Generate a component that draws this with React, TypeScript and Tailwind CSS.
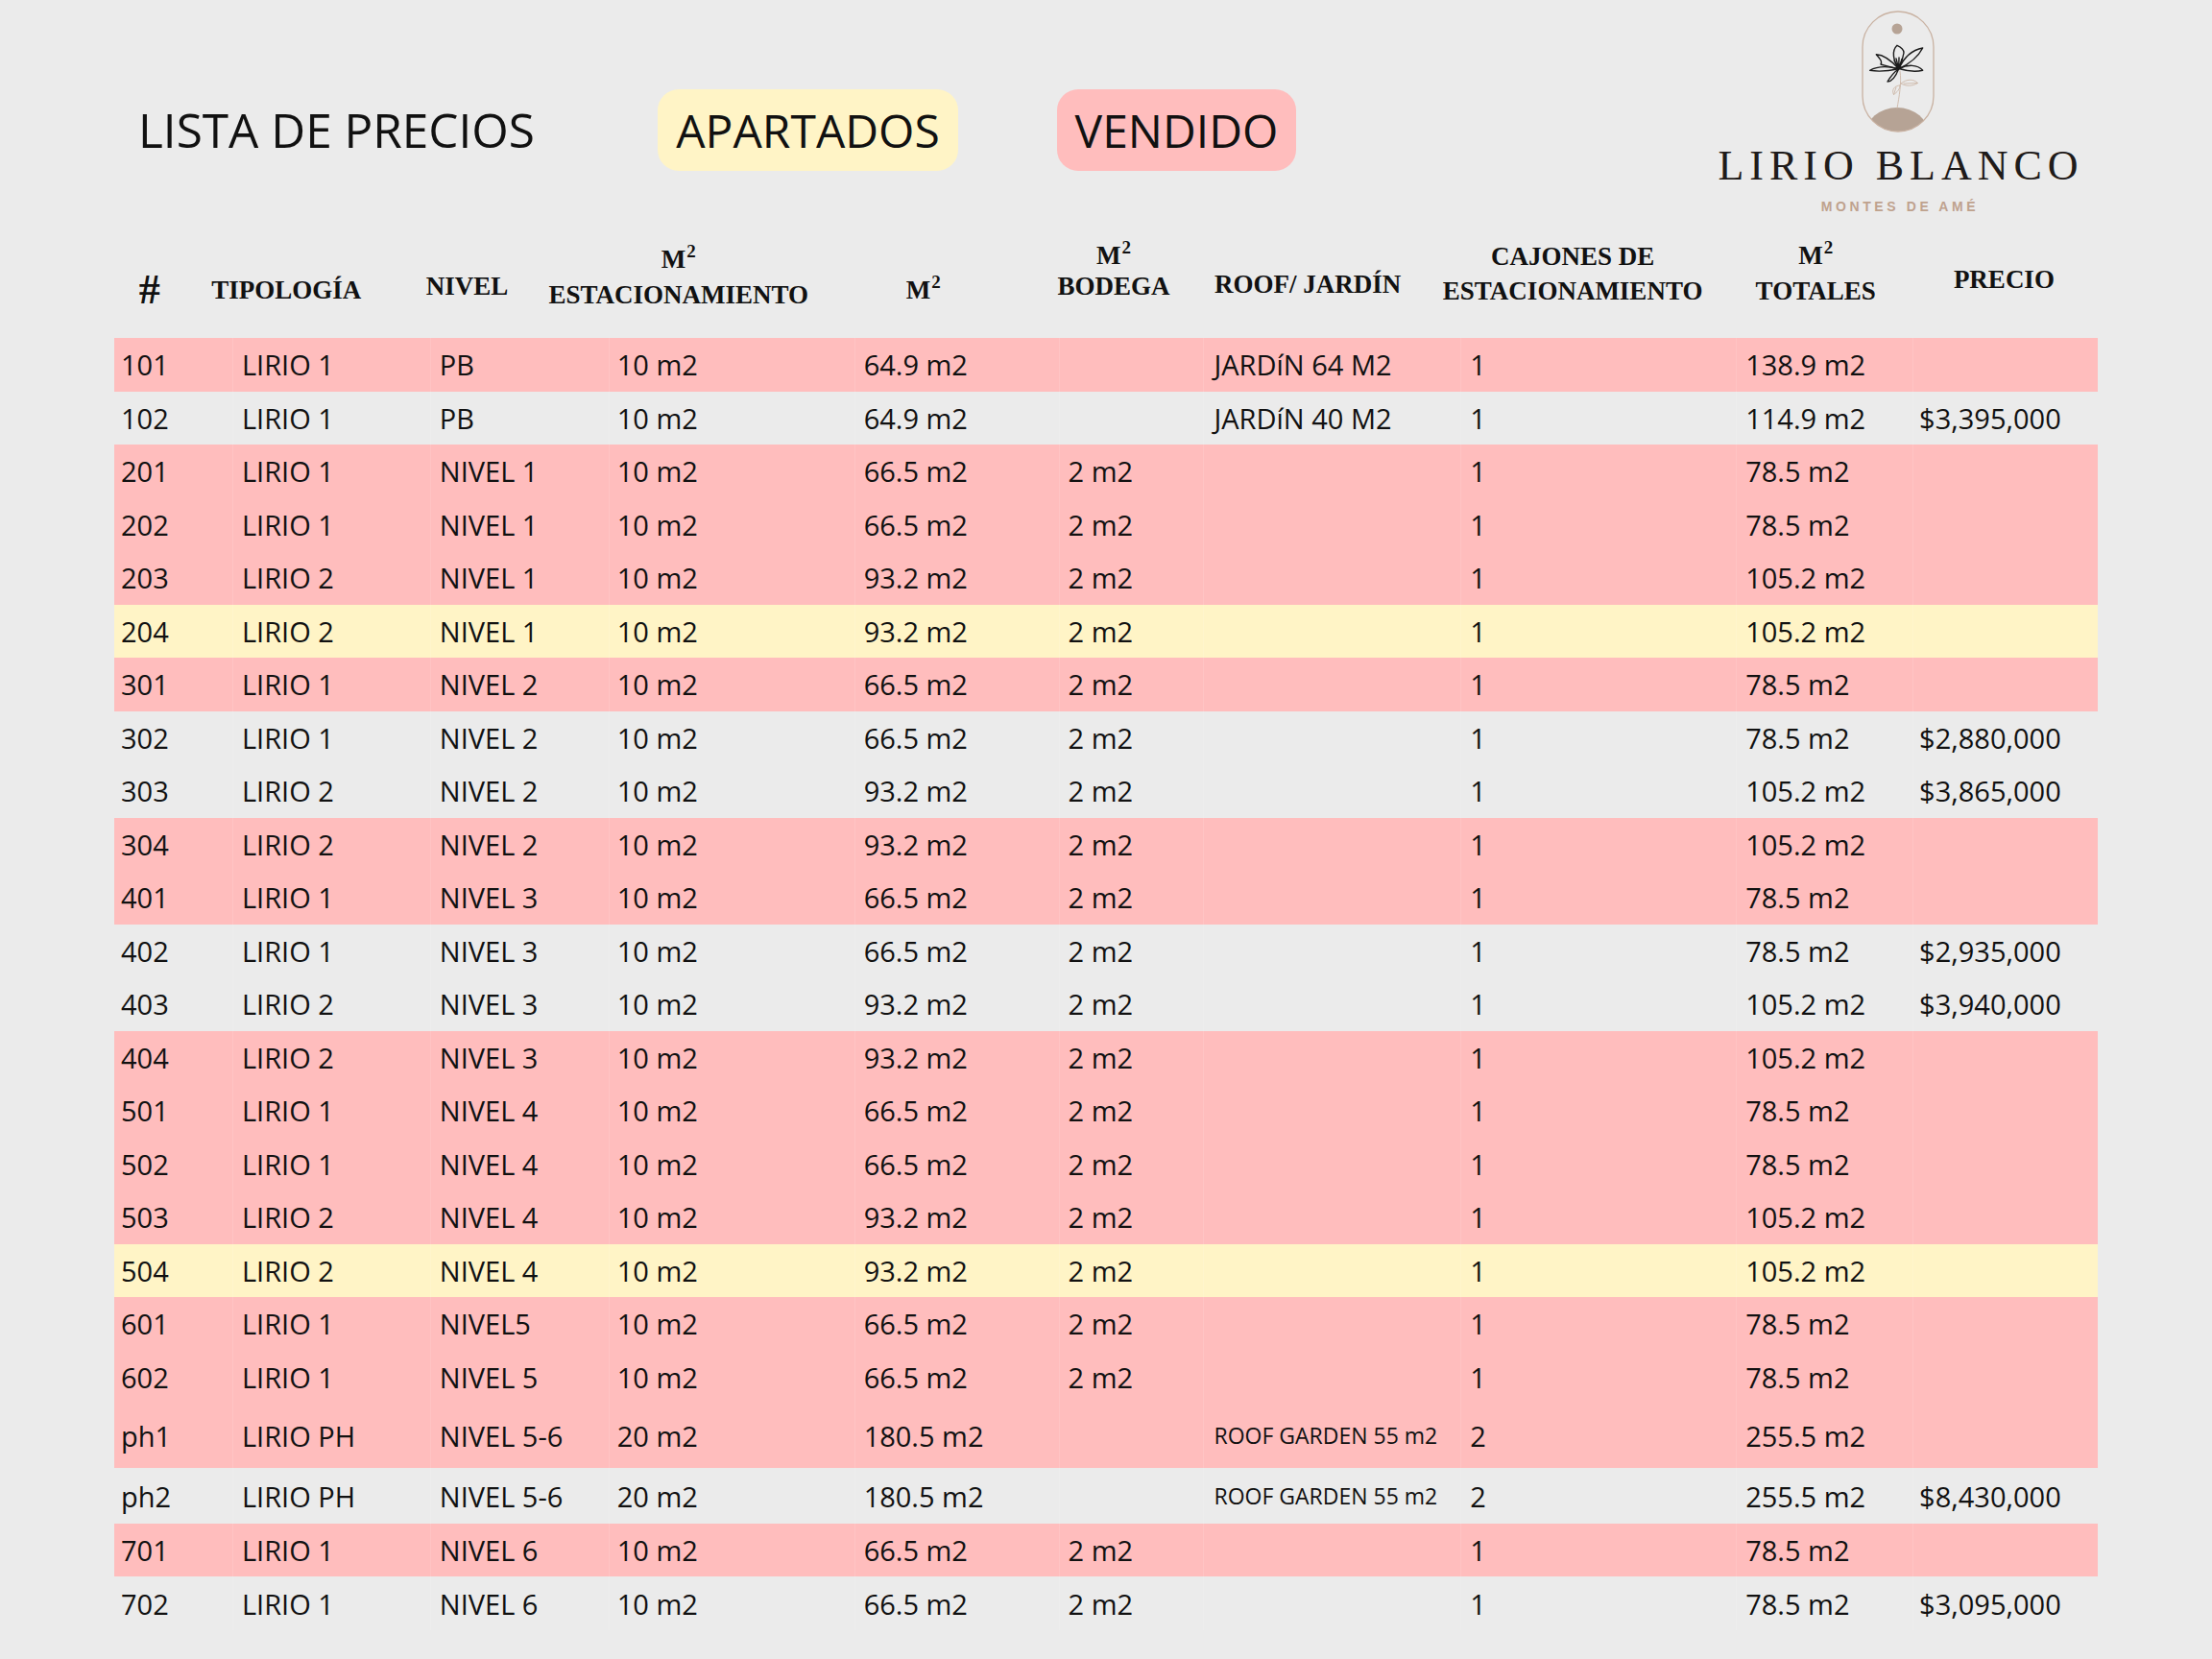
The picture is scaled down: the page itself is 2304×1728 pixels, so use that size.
import { FC } from 'react'

type Row = {
  id: string
  tipo: string
  nivel: string
  est: string
  m2: string
  bodega: string
  roof: string
  cajones: string
  total: string
  precio: string
  status: 'vendido' | 'apartado' | 'libre'
  h: string
}

const L1 = (id: string, nivel: string, status: Row['status'], precio = ''): Row => ({
  id, tipo: 'LIRIO 1', nivel, est: '10 m2', m2: '66.5 m2', bodega: '2 m2', roof: '', cajones: '1', total: '78.5 m2', precio, status, h: 'h-[55.5px]',
})
const L2 = (id: string, nivel: string, status: Row['status'], precio = ''): Row => ({
  id, tipo: 'LIRIO 2', nivel, est: '10 m2', m2: '93.2 m2', bodega: '2 m2', roof: '', cajones: '1', total: '105.2 m2', precio, status, h: 'h-[55.5px]',
})

const rows: Row[] = [
  { id: '101', tipo: 'LIRIO 1', nivel: 'PB', est: '10 m2', m2: '64.9 m2', bodega: '', roof: 'JARDíN 64 M2', cajones: '1', total: '138.9 m2', precio: '', status: 'vendido', h: 'h-[55.5px]' },
  { id: '102', tipo: 'LIRIO 1', nivel: 'PB', est: '10 m2', m2: '64.9 m2', bodega: '', roof: 'JARDíN 40 M2', cajones: '1', total: '114.9 m2', precio: '$3,395,000', status: 'libre', h: 'h-[55.5px]' },
  L1('201', 'NIVEL 1', 'vendido'),
  L1('202', 'NIVEL 1', 'vendido'),
  L2('203', 'NIVEL 1', 'vendido'),
  L2('204', 'NIVEL 1', 'apartado'),
  L1('301', 'NIVEL 2', 'vendido'),
  L1('302', 'NIVEL 2', 'libre', '$2,880,000'),
  L2('303', 'NIVEL 2', 'libre', '$3,865,000'),
  L2('304', 'NIVEL 2', 'vendido'),
  L1('401', 'NIVEL 3', 'vendido'),
  L1('402', 'NIVEL 3', 'libre', '$2,935,000'),
  L2('403', 'NIVEL 3', 'libre', '$3,940,000'),
  L2('404', 'NIVEL 3', 'vendido'),
  L1('501', 'NIVEL 4', 'vendido'),
  L1('502', 'NIVEL 4', 'vendido'),
  L2('503', 'NIVEL 4', 'vendido'),
  L2('504', 'NIVEL 4', 'apartado'),
  L1('601', 'NIVEL5', 'vendido'),
  L1('602', 'NIVEL 5', 'vendido'),
  { id: 'ph1', tipo: 'LIRIO PH', nivel: 'NIVEL 5-6', est: '20 m2', m2: '180.5 m2', bodega: '', roof: 'ROOF GARDEN 55 m2', cajones: '2', total: '255.5 m2', precio: '', status: 'vendido', h: 'h-[67px]' },
  { id: 'ph2', tipo: 'LIRIO PH', nivel: 'NIVEL 5-6', est: '20 m2', m2: '180.5 m2', bodega: '', roof: 'ROOF GARDEN 55 m2', cajones: '2', total: '255.5 m2', precio: '$8,430,000', status: 'libre', h: 'h-[58px]' },
  { ...L1('701', 'NIVEL 6', 'vendido'), h: 'h-[55px]' },
  { ...L1('702', 'NIVEL 6', 'libre', '$3,095,000'), h: 'h-[56px]' },
]

const cols = [
  'w-[123px] pl-[7px]',
  'w-[206px] pl-[9px] border-l border-white/10',
  'w-[186px] pl-[9px] border-l border-white/10',
  'w-[256px] pl-[8px] border-l border-white/10',
  'w-[213px] pl-[9px] border-l border-white/10',
  'w-[151px] pl-[9px] border-l border-white/10',
  'w-[268px] pl-[10px] border-l border-white/10',
  'w-[287px] pl-[9px] border-l border-white/10',
  'w-[184px] pl-[9px] border-l border-white/10',
  'w-[193px] pl-[6px] border-l border-white/10',
]

const bg = {
  vendido: 'bg-[#FFBDBD]',
  apartado: 'bg-[#FFF4C6]',
  libre: '',
}

// superíndice del M²
const Sq: FC = () => (
  <span className="relative -top-[11px] ml-[1px] text-[19px] leading-none">2</span>
)

const Logo: FC = () => (
  <div className="w-[400px] ml-[427px] mt-[11px] flex flex-col items-center">
    <svg width="76" height="127" viewBox="0 0 76 127" fill="none">
      <defs>
        <clipPath id="capsule">
          <rect x="1" y="1" width="74" height="125" rx="37" />
        </clipPath>
      </defs>
      <ellipse cx="37" cy="129" rx="33" ry="28" fill="#B6A395" clipPath="url(#capsule)" />
      <rect x="1" y="1" width="74" height="125" rx="37" stroke="#C9B2A2" strokeWidth="1.3" />
      <circle cx="37" cy="19" r="5.5" fill="#B6A395" />
      <g stroke="#CDB8A8" strokeWidth="0.9" strokeLinecap="round" strokeLinejoin="round">
        <path d="M40 63 C42 75 39 90 37 102" />
        <path d="M40 78 C34 78 31 83 33.5 87.5 C37 85 40 82 40 78 Z" />
        <path d="M41 76 C47 71 54 71 58.5 75.5 C53 79 46 79 41 76 Z" />
        <path d="M36 80 L33.5 87.5" />
        <path d="M44 76 L58.5 75.5" />
      </g>
      <g stroke="#1A1A1A" strokeWidth="1.4" strokeLinecap="round" strokeLinejoin="round">
        <path d="M38.7 60.7 C31 52 23 46 15.3 45.7 C19 50 22 53 20 56 C27 58 33 60 38.7 60.7" />
        <path d="M38.7 60.7 C33 52 31 42 37 36.3 C41 38 44 40 44 44 C43 50 41 56 38.7 60.7" />
        <path d="M39 60.5 C44 49 53 41 63.7 39 C60 46 53 54 39 60.5" />
        <path d="M39 60.5 C48 56 58 56 63.7 62.3 C56 64 47 63 39 60.5" />
        <path d="M38.7 60.7 C28 58 16 58 8.7 62.3 C18 64 28 63 38.7 60.7" />
        <path d="M38.7 60.7 C34 64 30 69 27 74 C31 74 35 70 38.7 60.7" />
        <path d="M38.7 60.7 L36 50 M38.7 60.7 L39 49 M38.7 60.7 L42 50.5 M38.7 60.7 L34 52" />
      </g>
    </svg>
    <div className="mt-[13px] pl-[6px] font-['Liberation_Serif',serif] text-[44px] leading-none tracking-[6px] text-[#1F1B1A]">
      LIRIO BLANCO
    </div>
    <div className="mt-[13px] pl-[4px] font-['Liberation_Sans',sans-serif] font-bold text-[14px] leading-none tracking-[3.6px] text-[#BFA28E]">
      MONTES DE AMÉ
    </div>
  </div>
)

const App: FC = () => {
  return (
    <div className="w-[2304px] h-[1728px] bg-[#EBEBEB] text-[#111] overflow-hidden">
      <div className="flex items-start h-[240px]">
        <div className="mt-[93px] h-[85px] flex items-center font-['Open_Sans',sans-serif] leading-none whitespace-nowrap">
          <div className="w-[685px] pl-[144px] text-[49.5px]">LISTA DE PRECIOS</div>
          <div className="w-[313px] h-[85px] rounded-[22px] bg-[#FFF4C6] flex items-center justify-center text-[48px]">APARTADOS</div>
          <div className="ml-[103px] w-[249px] h-[85px] rounded-[22px] bg-[#FFBDBD] flex items-center justify-center text-[48px]">VENDIDO</div>
        </div>
        <Logo />
      </div>

      <div className="ml-[119px] w-[2066px]">
        <div className="flex h-[112px] items-center text-center font-['Liberation_Serif',serif] font-bold text-[27px]">
          <div className="w-[74px] pt-[12px] text-[44px] leading-none">#</div>
          <div className="w-[212px] pt-[12px] leading-none">TIPOLOGÍA</div>
          <div className="w-[166px] pt-[4px] leading-none">NIVEL</div>
          <div className="w-[276px] pb-[15px] leading-[37px]">
            <div>M<Sq /></div>
            <div>ESTACIONAMIENTO</div>
          </div>
          <div className="w-[236px] pt-[12px] leading-none">M<Sq /></div>
          <div className="w-[162px] pb-[28px] leading-[32px]">
            <div>M<Sq /></div>
            <div>BODEGA</div>
          </div>
          <div className="w-[244px] leading-none">ROOF/ JARDÍN</div>
          <div className="w-[310px] pb-[22px] leading-[36px]">
            <div>CAJONES DE</div>
            <div>ESTACIONAMIENTO</div>
          </div>
          <div className="w-[198px] pb-[23px] leading-[37px]">
            <div>M<Sq /></div>
            <div>TOTALES</div>
          </div>
          <div className="w-[196px] pb-[10px] leading-none">PRECIO</div>
        </div>

        <div className="font-['Open_Sans',sans-serif] text-[29px] leading-none">
          {rows.map((r) => {
            const cells = [r.id, r.tipo, r.nivel, r.est, r.m2, r.bodega, r.roof, r.cajones, r.total, r.precio]
            return (
              <div key={r.id} className={`flex ${r.h} ${bg[r.status]}`}>
                {cells.map((c, i) => (
                  <div
                    key={i}
                    className={`${cols[i]} h-full flex items-center whitespace-nowrap ${i === 6 && c.startsWith('ROOF') ? 'text-[23px]' : ''}`}
                  >
                    {c}
                  </div>
                ))}
              </div>
            )
          })}
        </div>
      </div>
    </div>
  )
}

export default App
